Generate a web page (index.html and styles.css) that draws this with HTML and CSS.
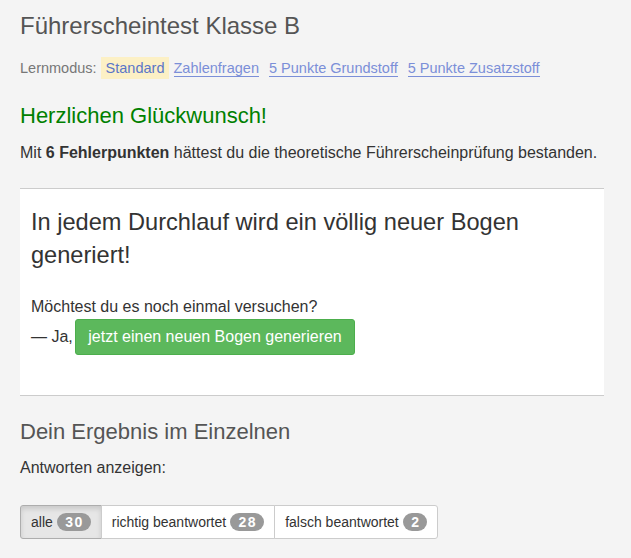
FILE: index.html
```html
<!DOCTYPE html>
<html lang="de">
<head>
    <meta charset="UTF-8">
    <meta name="viewport" content="width=device-width, initial-scale=1.0">
    <title>Führerscheintest Klasse B</title>
    <link rel="stylesheet" href="styles.css">
</head>
<body>
    <div class="page">
        <h1 class="title">Führerscheintest Klasse B</h1>
        <p class="modes">
            <span class="modes-label">Lernmodus:</span>
            <mark class="mode-active">Standard</mark>
            <a href="#" class="mode-link">Zahlenfragen</a>
            <a href="#" class="mode-link">5 Punkte Grundstoff</a>
            <a href="#" class="mode-link">5 Punkte Zusatzstoff</a>
        </p>

        <h3 class="success">Herzlichen Glückwunsch!</h3>
        <p class="summary">Mit <b>6 Fehlerpunkten</b> hättest du die theoretische Führerscheinprüfung bestanden.</p>

        <div class="retry">
            <h2 class="retry-title">In jedem Durchlauf wird ein völlig neuer Bogen generiert!</h2>
            <p class="retry-text">Möchtest du es noch einmal versuchen?<br>— Ja, <a href="#" class="btn-success">jetzt einen neuen Bogen generieren</a></p>
        </div>

        <h3 class="details">Dein Ergebnis im Einzelnen</h3>
        <p class="filter-label">Antworten anzeigen:</p>
        <div class="btn-group">
            <button class="btn active">alle <span class="badge">30</span></button>
            <button class="btn">richtig beantwortet <span class="badge">28</span></button>
            <button class="btn">falsch beantwortet <span class="badge">2</span></button>
        </div>
    </div>
</body>
</html>
```

FILE: styles.css
```css
*{
    box-sizing: border-box;
}
body{
    margin: 0;
    background: #f4f4f4;
    font-family: "Liberation Sans", Arial, sans-serif;
    font-size: 16px;
    line-height: 1.42857;
    color: #333;
}
.page{
    width: 604px;
    padding: 0 0 0 20px;
}
.title{
    margin: 13px 0 0;
    font-size: 24px;
    font-weight: normal;
    line-height: 1.1;
    color: #555;
}
.modes{
    margin: 19px 0 0;
    font-size: 14.5px;
    line-height: 20px;
    color: #777;
}
.mode-active{
    background: #fcf0c5;
    color: #5a76c8;
    padding: 3px 5px;
}
.mode-link{
    color: #7b8fd8;
    text-decoration: none;
    border-bottom: 1px solid #7b8fd8;
    margin-right: 6px;
}
.success{
    margin: 26px 0 0;
    font-size: 22px;
    font-weight: normal;
    line-height: 1.1;
    color: #008000;
}
.summary{
    margin: 13px 0 0;
}
.retry{
    margin-top: 24px;
    background: #fff;
    border-top: 1px solid #ccc;
    border-bottom: 1px solid #ccc;
    padding: 17px 11px 40px;
}
.retry-title{
    margin: 0;
    font-size: 23.6px;
    font-weight: normal;
    line-height: 33px;
}
.retry-text{
    margin: 23px 0 0;
    line-height: 24px;
}
.btn-success{
    display: inline-block;
    margin-left: -2px;
    padding: 7px 12px;
    font-size: 16px;
    line-height: 20px;
    color: #fff;
    background: #5cb85c;
    border: 1px solid #4cae4c;
    border-radius: 3px;
    text-decoration: none;
}
.details{
    margin: 24px 0 0;
    font-size: 22px;
    font-weight: normal;
    line-height: 1.1;
    color: #555;
}
.filter-label{
    margin: 12px 0 0;
}
.btn-group{
    display: flex;
    width: max-content;
    margin-top: 26px;
}
.btn{
    font: inherit;
    font-size: 14px;
    color: #333;
    background: #fff;
    border: 1px solid #ccc;
    padding: 6px 10px;
    line-height: 20px;
    margin-left: -1px;
}
.btn:first-child{
    margin-left: 0;
    border-radius: 3px 0 0 3px;
}
.btn:last-child{
    border-radius: 0 3px 3px 0;
}
.btn.active{
    background: #e6e6e6;
    border-color: #adadad;
    box-shadow: inset 0 3px 5px rgba(0,0,0,.125);
}
.badge{
    display: inline-block;
    min-width: 10px;
    padding: 2px 7px 2px 8.5px;
    font-size: 14px;
    font-weight: bold;
    letter-spacing: 1.5px;
    line-height: 14px;
    color: #fff;
    background: #999;
    border-radius: 10px;
}
```
